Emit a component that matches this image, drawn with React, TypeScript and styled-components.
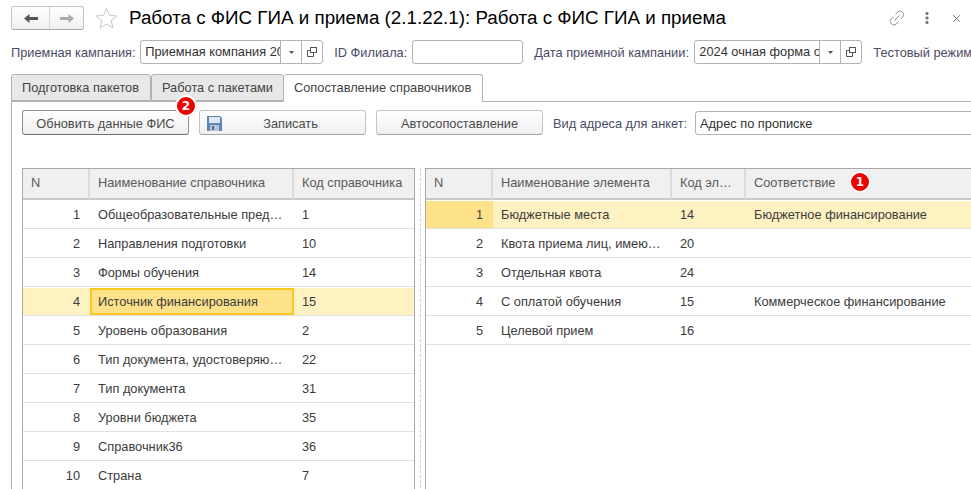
import React, { FC } from "react";
import styled, { createGlobalStyle } from "styled-components";

const GlobalStyle = createGlobalStyle`
  html, body {
    margin: 0;
    padding: 0;
    background: #fff;
  }
  body {
    font-family: "Liberation Sans", Arial, sans-serif;
    font-size: 12.8px;
    color: #4b4b4b;
  }
`;

const Page = styled.div`
  width: 971px;
  height: 489px;
  overflow: hidden;
  padding-top: 6px;
  box-sizing: border-box;
`;

// верхняя строка с заголовком
const TitleBar = styled.div`
  display: flex;
  align-items: center;
  height: 24px;
  padding-left: 11px;
`;

const NavGroup = styled.div`
  display: flex;
  width: 73px;
  height: 24px;
  box-sizing: border-box;
  border: 1px solid #c4c4c4;
  border-bottom-color: #a8a8a8;
  border-radius: 3px;
  background: linear-gradient(#ffffff, #f0f0f0);
`;

const NavButton = styled.div<{ $width: number; $divider?: boolean }>`
  flex: none;
  width: ${(p) => p.$width}px;
  box-sizing: border-box;
  display: flex;
  align-items: center;
  justify-content: center;
  border-right: ${(p) => (p.$divider ? "1px solid #d4d4d4" : "none")};
`;

const StarBox = styled.div`
  display: flex;
  margin-left: 11px;
`;

const Title = styled.h1`
  flex: 1;
  margin: 0 0 0 11px;
  font-size: 18.8px;
  font-weight: normal;
  color: #000;
  white-space: nowrap;
`;

const TitleActions = styled.div`
  display: flex;
  align-items: center;
  gap: 20px;
  padding-right: 11px;
`;

const CloseBox = styled.div`
  display: flex;
  margin-left: 4px;
`;

// строка отбора
const FilterRow = styled.div`
  display: flex;
  align-items: center;
  height: 24px;
  margin-top: 10px;
  padding-left: 11px;
`;

const Label = styled.span<{ $left?: number }>`
  margin-left: ${(p) => p.$left || 0}px;
  color: #4b4b65;
  white-space: nowrap;
`;

const Field = styled.div<{ $width: number; $left?: number }>`
  display: flex;
  flex: none;
  width: ${(p) => p.$width}px;
  height: 24px;
  margin-left: ${(p) => p.$left || 6}px;
  box-sizing: border-box;
  border: 1px solid #b4b4b4;
  border-radius: 3px;
  background: #fff;
`;

const FieldText = styled.div`
  flex: 1;
  min-width: 0;
  padding: 0 3px 0 4px;
  line-height: 22px;
  color: #333;
  white-space: nowrap;
  overflow: hidden;
`;

const FieldButton = styled.div`
  flex: none;
  width: 20px;
  display: flex;
  align-items: center;
  justify-content: center;
  border-left: 1px solid #b4b4b4;
`;

const TabBar = styled.div`
  display: flex;
  height: 27px;
  margin-top: 10px;
  padding-left: 11px;
  position: relative;
  z-index: 1;
`;

const Tab = styled.div<{ $active?: boolean; $width: number }>`
  width: ${(p) => p.$width}px;
  height: ${(p) => (p.$active ? 28 : 27)}px;
  box-sizing: border-box;
  padding-left: 10px;
  line-height: 25px;
  color: #444;
  white-space: nowrap;
  background: ${(p) => (p.$active ? "#fff" : "#e8e8e8")};
  border: 1px solid #b2b2b2;
  border-bottom: ${(p) => (p.$active ? "none" : "1px solid #b2b2b2")};
  border-left-width: ${(p) => (p.$active ? 0 : 1)}px;
  border-radius: 3px 3px 0 0;
`;

const Panel = styled.div`
  margin-left: 11px;
  padding: 8px 0 0 10px;
  border-top: 1px solid #b2b2b2;
  border-left: 1px solid #b2b2b2;
  margin-top: 0;
`;

const Button = styled.div<{ $default?: boolean; $left?: number; $icon?: boolean }>`
  position: relative;
  flex: none;
  display: flex;
  align-items: center;
  justify-content: center;
  width: 167px;
  height: 25px;
  margin-left: ${(p) => p.$left || 0}px;
  box-sizing: border-box;
  padding-top: 2px;
  padding-left: ${(p) => (p.$icon ? 16 : 0)}px;
  border: 1px solid ${(p) => (p.$default ? "#8f8f8f" : "#c4c4c4")};
  border-bottom-color: ${(p) => (p.$default ? "#6f6f6f" : "#a4a4a4")};
  border-radius: 3px;
  background: linear-gradient(#ffffff, #efefef);
  color: #4b4b4b;
`;

const Toolbar = styled.div`
  display: flex;
  align-items: center;
  height: 25px;
  ${Label} {
    padding-top: 2px;
  }
  ${Field} {
    margin-top: 1px;
  }
  ${FieldText} {
    line-height: 24px;
  }
`;

const SaveIcon = styled.svg`
  position: absolute;
  left: 7px;
  top: 5px;
`;

// красные номера поверх формы
const Badge = styled.div<{ $x: number; $y: number }>`
  position: absolute;
  left: ${(p) => p.$x}px;
  top: ${(p) => p.$y}px;
  width: 18px;
  height: 18px;
  border-radius: 50%;
  background: #f00000;
  border: 2px solid #fff;
  box-shadow: 0 0 1px #ccc;
  color: #fff;
  font-family: "DejaVu Sans", sans-serif;
  font-size: 12px;
  font-weight: bold;
  line-height: 18px;
  text-align: center;
  z-index: 5;
`;

const Tables = styled.div`
  display: flex;
  margin-top: 33px;
`;

const Grid = styled.div<{ $width: number }>`
  flex: none;
  width: ${(p) => p.$width}px;
  height: 340px;
  box-sizing: border-box;
  border: 1px solid #a9a9a9;
  background: #fff;
`;

const Row = styled.div<{ $cols: string }>`
  display: grid;
  grid-template-columns: ${(p) => p.$cols};
`;

const HeadCell = styled.div`
  height: 31px;
  box-sizing: border-box;
  padding: 0 10px 0 8px;
  line-height: 28px;
  color: #5a5a5a;
  white-space: nowrap;
  overflow: hidden;
  text-overflow: ellipsis;
  background: #f0f0f0;
  border-right: 2px solid #dcdcdc;
  border-bottom: 2px solid #c8c8c8;
  &:last-child {
    border-right: none;
  }
`;

const Cell = styled.div<{ $fill?: string; $num?: boolean; $focus?: boolean }>`
  height: 29px;
  box-sizing: border-box;
  padding: 0 ${(p) => (p.$num ? 10 : 9)}px 0 ${(p) => (p.$num ? 0 : 8)}px;
  line-height: 27px;
  text-align: ${(p) => (p.$num ? "right" : "left")};
  color: #3c3c3c;
  white-space: nowrap;
  overflow: hidden;
  text-overflow: ellipsis;
  border-top: 1px solid #fff;
  border-bottom: 1px solid #e2e2e2;
  background: ${(p) => p.$fill || "#fff"};
  background-clip: padding-box;
  box-shadow: ${(p) => (p.$focus ? "inset 0 0 0 2px #fbc81e" : "none")};
`;

const Splitter = styled.div`
  flex: none;
  width: 10px;
  height: 340px;
  display: flex;
  justify-content: center;
  &::before {
    content: "";
    width: 0;
    border-left: 1px dashed #d0d0d0;
  }
`;

const Arrow: FC<{ color: string; flip?: boolean }> = ({ color, flip }) => (
  <svg width="14" height="9" viewBox="0 0 14 9" style={flip ? { transform: "scaleX(-1)" } : undefined}>
    <path d="M0 4.5 L5.5 0 V3 H14 V6 H5.5 V9 Z" fill={color} />
  </svg>
);

const CaretIcon: FC = () => (
  <svg width="5" height="3" viewBox="0 0 5 3">
    <path d="M0 0 H5 L2.5 3 Z" fill="#555" />
  </svg>
);

const OpenIcon: FC = () => (
  <svg width="10" height="10" viewBox="0 0 10 10" fill="none" stroke="#555">
    <rect x="3.5" y="0.5" width="6" height="5" fill="#fff" />
    <path d="M3.5 3.5 H0.5 V9.5 H6.5 V5.5" />
  </svg>
);

const leftRows = [
  ["1", "Общеобразовательные предметы", "1"],
  ["2", "Направления подготовки", "10"],
  ["3", "Формы обучения", "14"],
  ["4", "Источник финансирования", "15"],
  ["5", "Уровень образования", "2"],
  ["6", "Тип документа, удостоверяющего личность", "22"],
  ["7", "Тип документа", "31"],
  ["8", "Уровни бюджета", "35"],
  ["9", "Справочник36", "36"],
  ["10", "Страна", "7"],
];

const rightRows = [
  ["1", "Бюджетные места", "14", "Бюджетное финансирование"],
  ["2", "Квота приема лиц, имеющих особое право", "20", ""],
  ["3", "Отдельная квота", "24", ""],
  ["4", "С оплатой обучения", "15", "Коммерческое финансирование"],
  ["5", "Целевой прием", "16", ""],
];

const leftCols = "67px 204px 120px";
const rightCols = "67px 179px 74px 1fr";
const SELECTED = "#fef1c2";
const ACTIVE = "#fde28a";

const App: FC = () => {
  return (
    <Page>
      <GlobalStyle />
      <TitleBar>
        <NavGroup>
          <NavButton $width={38} $divider>
            <Arrow color="#555" />
          </NavButton>
          <NavButton $width={33}>
            <Arrow color="#aaa" flip />
          </NavButton>
        </NavGroup>
        <StarBox>
          <svg width="23" height="22" viewBox="0 0 23 22" fill="none" stroke="#c8c8c8">
            <path d="M11.5 1.5 L14.4 8.3 L21.8 8.9 L16.2 13.7 L17.9 20.9 L11.5 17.1 L5.1 20.9 L6.8 13.7 L1.2 8.9 L8.6 8.3 Z" />
          </svg>
        </StarBox>
        <Title>Работа с ФИС ГИА и приема (2.1.22.1): Работа с ФИС ГИА и приема</Title>
        <TitleActions>
          <svg width="16" height="16" viewBox="0 0 16 16" fill="none" stroke="#8a8a8a" strokeWidth="1">
            <path d="M6.5 4 L9 1.8 C10.3 0.8 12.4 0.9 13.7 2.2 C15 3.6 15 5.6 13.9 6.9 L11.6 9.1" />
            <path d="M9.5 12 L7 14.2 C5.7 15.2 3.6 15.1 2.3 13.8 C1 12.4 1 10.4 2.1 9.1 L4.4 6.9" />
            <path d="M5.5 10.5 L10.5 5.5" />
          </svg>
          <svg width="4" height="12" viewBox="0 0 4 12" fill="#777">
            <rect x="0.5" y="0" width="3" height="3" rx="1" />
            <rect x="0.5" y="4.5" width="3" height="3" rx="1" />
            <rect x="0.5" y="9" width="3" height="3" rx="1" />
          </svg>
          <CloseBox>
            <svg width="7" height="7" viewBox="0 0 7 7" stroke="#777" strokeWidth="1">
              <path d="M0.3 0.3 L6.7 6.7 M6.7 0.3 L0.3 6.7" />
            </svg>
          </CloseBox>
        </TitleActions>
      </TitleBar>

      <FilterRow>
        <Label>Приемная кампания:</Label>
        <Field $width={183} $left={4.6}>
          <FieldText>Приемная компания 2024</FieldText>
          <FieldButton>
            <CaretIcon />
          </FieldButton>
          <FieldButton>
            <OpenIcon />
          </FieldButton>
        </Field>
        <Label $left={11}>ID Филиала:</Label>
        <Field $width={111} $left={5}>
          <FieldText />
        </Field>
        <Label $left={11}>Дата приемной кампании:</Label>
        <Field $width={168} $left={5.4}>
          <FieldText>2024 очная форма обучения</FieldText>
          <FieldButton>
            <CaretIcon />
          </FieldButton>
          <FieldButton>
            <OpenIcon />
          </FieldButton>
        </Field>
        <Label $left={11}>Тестовый режим</Label>
      </FilterRow>

      <TabBar>
        <Tab $width={140}>Подготовка пакетов</Tab>
        <Tab $width={133}>Работа с пакетами</Tab>
        <Tab $width={199} $active>
          Сопоставление справочников
        </Tab>
      </TabBar>

      <Panel>
        <Toolbar>
          <Button $default>Обновить данные ФИС</Button>
          <Button $left={10} $icon>
            <SaveIcon width="15" height="15" viewBox="0 0 15 15">
              <path d="M0 0 H13 L15 2 V15 H0 Z" fill="#5f86b8" />
              <rect x="2" y="1" width="11" height="6" fill="#dfe8f2" />
              <rect x="3" y="9" width="9" height="6" fill="#b9c4d0" />
              <rect x="5" y="10" width="2" height="4" fill="#4d6f9c" />
            </SaveIcon>
            Записать
          </Button>
          <Button $left={10}>Автосопоставление</Button>
          <Label $left={10}>Вид адреса для анкет:</Label>
          <Field $width={400} $left={8}>
            <FieldText>Адрес по прописке</FieldText>
          </Field>
        </Toolbar>

        <Tables>
          <Grid $width={393}>
            <Row $cols={leftCols}>
              <HeadCell>N</HeadCell>
              <HeadCell>Наименование справочника</HeadCell>
              <HeadCell>Код справочника</HeadCell>
            </Row>
            {leftRows.map((r) => {
              const selected = r[0] === "4";
              return (
                <Row $cols={leftCols} key={r[0]}>
                  <Cell $num $fill={selected ? SELECTED : undefined}>
                    {r[0]}
                  </Cell>
                  <Cell $fill={selected ? ACTIVE : undefined} $focus={selected}>
                    {r[1]}
                  </Cell>
                  <Cell $fill={selected ? SELECTED : undefined}>{r[2]}</Cell>
                </Row>
              );
            })}
          </Grid>
          <Splitter />
          <Grid $width={600}>
            <Row $cols={rightCols}>
              <HeadCell>N</HeadCell>
              <HeadCell>Наименование элемента</HeadCell>
              <HeadCell>Код элемента</HeadCell>
              <HeadCell>Соответствие</HeadCell>
            </Row>
            {rightRows.map((r) => {
              const selected = r[0] === "1";
              return (
                <Row $cols={rightCols} key={r[0]}>
                  <Cell $num $fill={selected ? ACTIVE : undefined}>
                    {r[0]}
                  </Cell>
                  <Cell $fill={selected ? SELECTED : undefined}>{r[1]}</Cell>
                  <Cell $fill={selected ? SELECTED : undefined}>{r[2]}</Cell>
                  <Cell $fill={selected ? SELECTED : undefined}>{r[3]}</Cell>
                </Row>
              );
            })}
          </Grid>
        </Tables>
      </Panel>
      <Badge $x={175} $y={95}>2</Badge>
      <Badge $x={849} $y={171}>1</Badge>
    </Page>
  );
};

export default App;
